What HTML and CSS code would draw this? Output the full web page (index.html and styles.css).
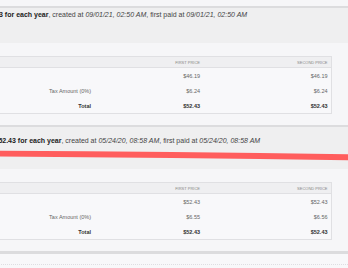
FILE: index.html
```html
<!DOCTYPE html>
<html lang="en">
<head>
  <meta charset="UTF-8" />
  <meta name="viewport" content="width=device-width, initial-scale=1.0"/>
  <title>Subscriptions</title>
  <link rel="stylesheet" href="styles.css">
</head>
<body>

  <div class="page">

    <!-- Subscription 1 -->
    <section class="card">
      <div class="card-head">
        <span class="head-text"><b>$52.43 for each year</b>, created at <i>09/01/21, 02:50 AM</i>, first paid at <i>09/01/21, 02:50 AM</i></span>
      </div>
      <div class="card-body">
        <table class="prices">
          <colgroup>
            <col class="col-label">
            <col class="col-first">
            <col class="col-second">
          </colgroup>
          <thead>
            <tr><th></th><th>First price</th><th>Second price</th></tr>
          </thead>
          <tbody>
            <tr><td></td><td>$46.19</td><td>$46.19</td></tr>
            <tr><td>Tax Amount (0%)</td><td>$6.24</td><td>$6.24</td></tr>
            <tr class="total"><td>Total</td><td>$52.43</td><td>$52.43</td></tr>
          </tbody>
        </table>
      </div>
    </section>

    <!-- Subscription 2 -->
    <section class="card">
      <div class="card-head">
        <span class="head-icon"></span>
        <span class="head-text"><b>$52.43 for each year</b>, created at <i>05/24/20, 08:58 AM</i>, first paid at <i>05/24/20, 08:58 AM</i></span>
      </div>
      <div class="card-body">
        <table class="prices">
          <colgroup>
            <col class="col-label">
            <col class="col-first">
            <col class="col-second">
          </colgroup>
          <thead>
            <tr><th></th><th>First price</th><th>Second price</th></tr>
          </thead>
          <tbody>
            <tr><td></td><td>$52.43</td><td>$52.43</td></tr>
            <tr><td>Tax Amount (0%)</td><td>$6.55</td><td>$6.56</td></tr>
            <tr class="total"><td>Total</td><td>$52.43</td><td>$52.43</td></tr>
          </tbody>
        </table>
      </div>
    </section>

    <div class="page-end"><div class="page-end-rule"></div></div>
  </div>

  <!-- hand drawn strike over the second subscription -->
  <svg class="annotation" viewBox="0 0 348 14" preserveAspectRatio="none">
    <path d="M0 1.8 Q 170 2.4 348 5.2 L 348 11.2 Q 170 8.8 0 7.6 Z" fill="#ff5d5d"/>
  </svg>

</body>
</html>
```

FILE: styles.css
```css
:root {
  --font-sans: 'Liberation Sans', Arial, sans-serif;
  --page-bg: #f6f6f8;
  --head-bg: #efeff0;
  --rule: #dcdcde;
  --table-border: #e0e0e3;
  --table-head: #efeff1;
  --text-dark: #222;
  --text: #444;
  --text-muted: #666;
}

body {
  margin: 0;
  font-family: var(--font-sans);
  background-color: var(--page-bg);
  position: relative;
  height: 268px;
  overflow: hidden;
}

.page {
  margin-left: -30px;
  padding-top: 6px;
}

.card {
  border-top: 2px solid var(--rule);
}

.card-head {
  display: flex;
  align-items: flex-end;
  background-color: var(--head-bg);
  padding: 2px 17px 23px 11.5px;
}

.head-icon {
  flex: none;
  width: 9px;
  height: 17px;
  margin-right: 4px;
  border-radius: 2px;
  background-color: #d6d6d8;
}

.head-text {
  white-space: nowrap;
  font-size: 7px;
  line-height: 10px;
  color: var(--text);
}

.head-text b {
  color: var(--text-dark);
}

.card-body {
  background-color: var(--page-bg);
  padding: 13px 17px 11px 15.5px;
}

.prices {
  width: 100%;
  table-layout: fixed;
  border-collapse: collapse;
  border: 1px solid var(--table-border);
  background-color: #f8f8fa;
  font-size: 5.5px;
  color: var(--text-muted);
}

.col-label { width: 108px; }
.col-first { width: 109px; }
.col-second { width: 128px; }

.prices th {
  height: 10px;
  padding: 0 3px;
  text-align: right;
  font-size: 4px;
  font-weight: normal;
  text-transform: uppercase;
  color: #888;
  background-color: var(--table-head);
  border-bottom: 1px solid var(--table-border);
}

.prices td {
  height: 15px;
  padding: 0 3px;
  text-align: right;
}

.prices .total td {
  font-weight: bold;
  color: #333;
}

.page-end {
  border-top: 3px solid var(--rule);
  padding-top: 10px;
  background-color: #f8f8fa;
  height: 4px;
}

.page-end-rule {
  border-top: 1px dotted #dedee2;
}

.annotation {
  position: absolute;
  left: 0;
  top: 149px;
  width: 348px;
  height: 14px;
}
```
